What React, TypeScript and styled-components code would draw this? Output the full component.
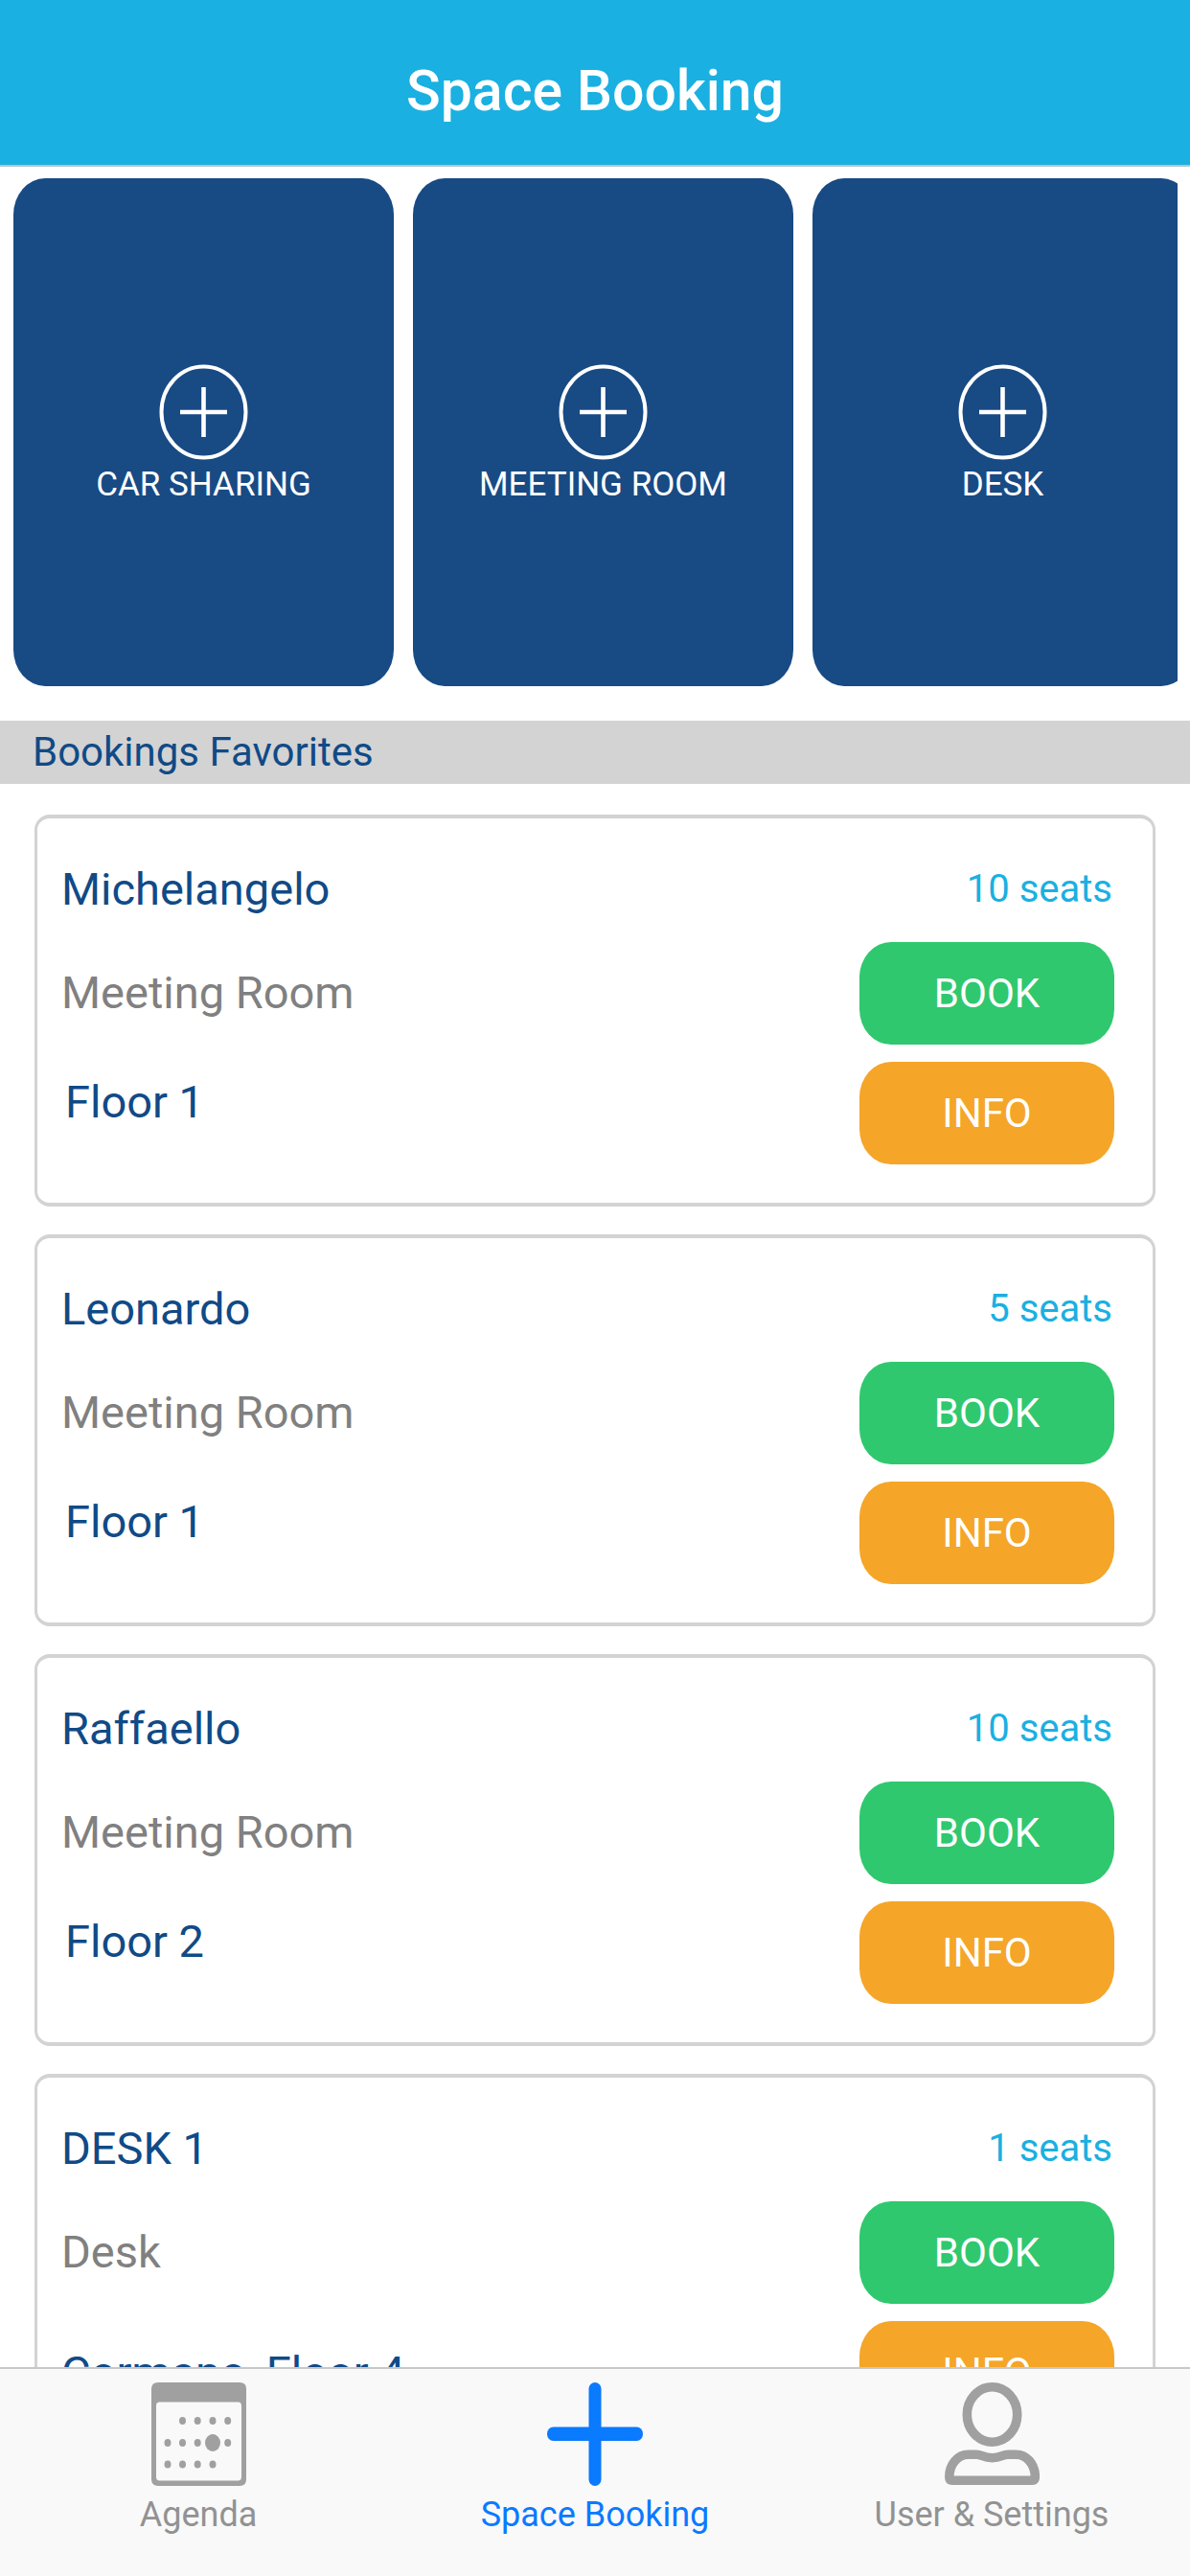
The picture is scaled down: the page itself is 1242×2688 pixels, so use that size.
import React from "react";
import styled, { createGlobalStyle } from "styled-components";

const colors = {
  sky: "#1ab0e2",
  navy: "#184a84",
  ink: "#104a87",
  grey: "#808080",
  line: "#d3d3d3",
  green: "#2fc86e",
  orange: "#f5a528",
  active: "#0a7aff",
  idle: "#929292",
  idleIcon: "#a0a0a0",
};

const GlobalStyle = createGlobalStyle`
  * { box-sizing: border-box; }
  body {
    margin: 0;
    background: #ffffff;
    font-family: Roboto, "Liberation Sans", sans-serif;
  }
  h1, h2, h3, p, ul { margin: 0; padding: 0; font-weight: 400; }
  button { border: 0; padding: 0; font-family: inherit; cursor: pointer; }
`;

const Screen = styled.div`
  display: flex;
  flex-direction: column;
  height: 100vh;
`;

const Header = styled.header`
  padding: 60px 24px 42px;
  background: ${colors.sky};
  border-bottom: 2px solid #b8c4c8;
  text-align: center;
`;

const Title = styled.h1`
  && { font-weight: 500; }
  font-size: 59px;
  line-height: 70px;
  color: #ffffff;
`;

const Content = styled.main`
  flex: 1;
  min-height: 0;
  overflow-y: auto;
  scrollbar-width: none;
`;

const Shelf = styled.section`
  display: flex;
  gap: 20px;
  margin: 12px 13px 36px 14px;
  overflow-x: auto;
  scrollbar-width: none;
`;

const Tile = styled.button`
  flex: none;
  display: flex;
  flex-direction: column;
  align-items: center;
  justify-content: center;
  gap: 6px;
  width: 397px;
  height: 530px;
  padding-top: 4px;
  border-radius: 33px / 38px;
  background: ${colors.navy};
  color: #ffffff;
  font-size: 35px;
  line-height: 40px;
`;

const SectionTitle = styled.h2`
  padding: 8px 34px;
  background: ${colors.line};
  color: ${colors.ink};
  font-size: 42px;
  line-height: 50px;
`;

const List = styled.ul`
  display: flex;
  flex-direction: column;
  gap: 29px;
  padding: 32px 36px;
  list-style: none;
`;

const Card = styled.li`
  display: flex;
  justify-content: space-between;
  padding: 46px 40px 40px 25px;
  border: solid ${colors.line};
  border-width: 4px 3px;
  border-radius: 16px;
`;

const Details = styled.div`
  display: flex;
  flex-direction: column;
  gap: 52px;
  font-size: 47px;
  line-height: 56px;
`;

const Name = styled.h3`
  font-size: 47px;
  color: ${colors.ink};
`;

const Kind = styled.p`
  color: ${colors.grey};
`;

const Place = styled.p<{ $withSite: boolean }>`
  padding-left: ${(p) => (p.$withSite ? 0 : 4)}px;
  line-height: ${(p) => (p.$withSite ? 92 : 68)}px;
  color: ${colors.ink};
`;

const Side = styled.div`
  display: flex;
  flex-direction: column;
  gap: 18px;
  width: 266px;
`;

const Seats = styled.p`
  padding: 0 2px 9px 0;
  font-size: 40px;
  line-height: 56px;
  text-align: right;
  color: ${colors.sky};
`;

const Action = styled.button<{ $color: string }>`
  height: 107px;
  border-radius: 33px / 37px;
  background: ${(p) => p.$color};
  color: #ffffff;
  font-size: 42px;
  line-height: 48px;
`;

const TabBar = styled.nav`
  display: flex;
  padding: 14px 0 44px;
  border-top: 2px solid #c8c8c8;
  background: #f9f9f9;
`;

const Tab = styled.button<{ $active?: boolean }>`
  flex: 1;
  display: flex;
  flex-direction: column;
  align-items: center;
  gap: 10px;
  background: transparent;
  color: ${(p) => (p.$active ? colors.active : colors.idle)};
  font-size: 36px;
  line-height: 40px;
`;

const AddCircleIcon = () => (
  <svg width="93" height="100" viewBox="0 0 93 100" fill="none" stroke="#ffffff" strokeWidth="4" aria-hidden="true">
    <ellipse cx="46.5" cy="50" rx="44" ry="47.6" />
    <path d="M22 50H71M46.5 24V76" strokeWidth="4.6" />
  </svg>
);

const calendarDots = [
  [32.5, 40], [48.2, 40], [64, 40], [79.7, 40],
  [17, 63], [32.5, 63], [48.2, 63], [79.7, 63],
  [17, 85.6], [32.5, 85.6], [48.2, 85.6], [64, 85.6],
];

const CalendarIcon = () => (
  <svg width="99" height="108" viewBox="0 0 99 108" fill={colors.idleIcon} aria-hidden="true">
    <path
      fillRule="evenodd"
      d="M7 0H92Q99 0 99 7V101Q99 108 92 108H7Q0 108 0 101V7Q0 0 7 0ZM8.5 20.5Q5 20.5 5 24.5V98.5Q5 102.5 8.5 102.5H90.5Q94 102.5 94 98.5V24.5Q94 20.5 90.5 20.5Z"
    />
    {calendarDots.map(([x, y]) => (
      <ellipse key={`${x}-${y}`} cx={x} cy={y} rx="3.5" ry="4" />
    ))}
    <ellipse cx="64" cy="63" rx="8" ry="9" />
  </svg>
);

const PlusIcon = () => (
  <svg width="100" height="108" viewBox="0 0 100 108" fill={colors.active} aria-hidden="true">
    <rect x="43.5" y="0" width="13" height="108" rx="6.5" />
    <rect x="0" y="46.5" width="100" height="14.5" rx="6.5" ry="7.2" />
  </svg>
);

const UserIcon = () => (
  <svg width="99" height="108" viewBox="0 0 99 108" fill="none" stroke={colors.idleIcon} aria-hidden="true">
    <ellipse cx="49.5" cy="33.5" rx="26.2" ry="28.7" strokeWidth="9.6" />
    <path
      d="M7.5 102.2H91.5Q94.3 102 94.3 98.5C94.3 85 85 75.2 74.5 75.2H66C60 75.2 59 78.7 49.5 78.7C40 78.7 39 75.2 33 75.2H24.5C14 75.2 4.8 85 4.8 98.5Q4.8 102 7.5 102.2Z"
      strokeWidth="9.6"
      strokeLinejoin="round"
    />
  </svg>
);

const services = ["CAR SHARING", "MEETING ROOM", "DESK"];

const favorites = [
  { name: "Michelangelo", kind: "Meeting Room", site: "", floor: "Floor 1", seats: 10 },
  { name: "Leonardo", kind: "Meeting Room", site: "", floor: "Floor 1", seats: 5 },
  { name: "Raffaello", kind: "Meeting Room", site: "", floor: "Floor 2", seats: 10 },
  { name: "DESK 1", kind: "Desk", site: "Cormano", floor: "Floor 4", seats: 1 },
];

export default function App() {
  return (
    <Screen>
      <GlobalStyle />
      <Header>
        <Title>Space Booking</Title>
      </Header>
      <Content>
        <Shelf>
          {services.map((label) => (
            <Tile key={label} type="button">
              <AddCircleIcon />
              {label}
            </Tile>
          ))}
        </Shelf>
        <SectionTitle>Bookings Favorites</SectionTitle>
        <List>
          {favorites.map((f) => (
            <Card key={f.name}>
              <Details>
                <Name>{f.name}</Name>
                <Kind>{f.kind}</Kind>
                <Place $withSite={f.site !== ""}>
                  {f.site ? `${f.site}, ${f.floor}` : f.floor}
                </Place>
              </Details>
              <Side>
                <Seats>{`${f.seats} seats`}</Seats>
                <Action type="button" $color={colors.green}>BOOK</Action>
                <Action type="button" $color={colors.orange}>INFO</Action>
              </Side>
            </Card>
          ))}
        </List>
      </Content>
      <TabBar>
        <Tab type="button">
          <CalendarIcon />
          Agenda
        </Tab>
        <Tab type="button" $active aria-current="page">
          <PlusIcon />
          Space Booking
        </Tab>
        <Tab type="button">
          <UserIcon />
          {"User & Settings"}
        </Tab>
      </TabBar>
    </Screen>
  );
}
